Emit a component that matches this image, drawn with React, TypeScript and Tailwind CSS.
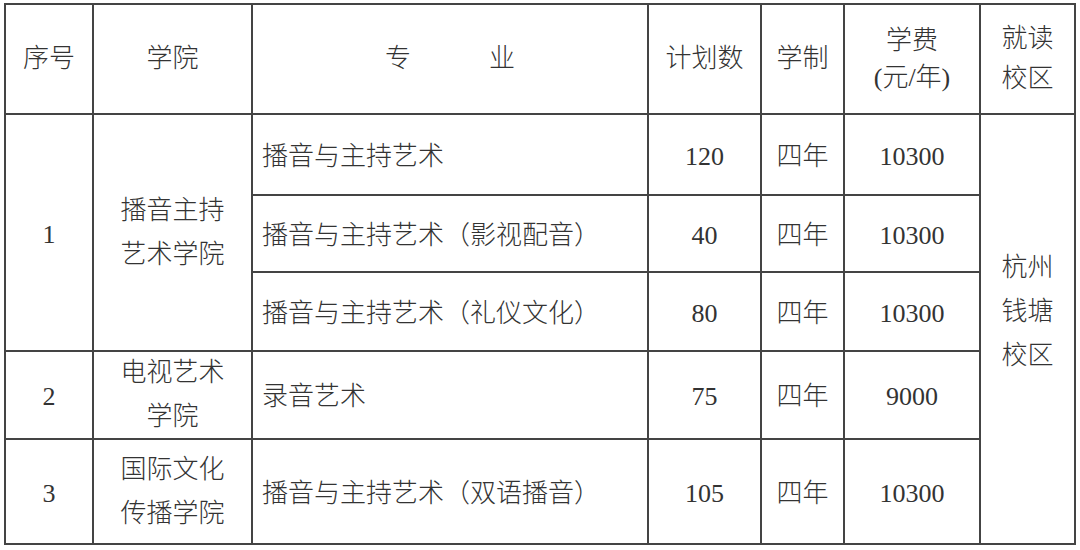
import { Fragment } from "react";

const FONT = {
  fontFamily: '"Liberation Serif", "Noto Sans CJK SC", serif',
};

const cell = "flex items-center justify-center bg-white text-center";

type Major = {
  name: string;
  plan: string;
  years: string;
  fee: string;
};

type College = {
  no: string;
  lines: string[];
  majors: Major[];
  rowClass: string;
};

const colleges: College[] = [
  {
    no: "1",
    lines: ["播音主持", "艺术学院"],
    majors: [
      { name: "播音与主持艺术", plan: "120", years: "四年", fee: "10300" },
      { name: "播音与主持艺术（影视配音）", plan: "40", years: "四年", fee: "10300" },
      { name: "播音与主持艺术（礼仪文化）", plan: "80", years: "四年", fee: "10300" },
    ],
    rowClass: "row-start-2 row-span-3",
  },
  {
    no: "2",
    lines: ["电视艺术", "学院"],
    majors: [{ name: "录音艺术", plan: "75", years: "四年", fee: "9000" }],
    rowClass: "row-start-5 row-span-1",
  },
  {
    no: "3",
    lines: ["国际文化", "传播学院"],
    majors: [
      { name: "播音与主持艺术（双语播音）", plan: "105", years: "四年", fee: "10300" },
    ],
    rowClass: "row-start-6 row-span-1",
  },
];

const ROW_START: Record<number, string> = {
  2: "row-start-2",
  3: "row-start-3",
  4: "row-start-4",
  5: "row-start-5",
  6: "row-start-6",
};

export default function App() {
  let rowIndex = 2;
  return (
    <div className="h-[550px] w-[1080px] bg-white pl-[4px] pt-[3px]" style={FONT}>
      <div className="grid w-[1072px] grid-cols-[86px_157px_394px_111px_81px_134px_93px] grid-rows-[108px_79px_75px_77px_86px_103px] gap-[2px] bg-[#444] p-[2px] text-[26px] font-light leading-[44px] text-[#333]">
        {/* header */}
        <div className={cell}>序号</div>
        <div className={cell}>学院</div>
        <div className={`${cell} whitespace-pre`}>专　　　业</div>
        <div className={cell}>计划数</div>
        <div className={cell}>学制</div>
        <div className={`${cell} flex-col leading-[37px]`}>
          <span>学费</span>
          <span>(元/年)</span>
        </div>
        <div className={`${cell} flex-col leading-[40px]`}>
          <span>就读</span>
          <span>校区</span>
        </div>

        {colleges.map((college) => (
          <Fragment key={college.no}>
            <div className={`${cell} col-start-1 ${college.rowClass}`}>
              <span className="pt-[4px]">{college.no}</span>
            </div>
            <div className={`${cell} col-start-2 flex-col ${college.rowClass}`}>
              {college.lines.map((line) => (
                <span key={line}>{line}</span>
              ))}
            </div>
            {college.majors.map((major) => {
              const rowStart = ROW_START[rowIndex++];
              return (
                <Fragment key={rowStart}>
                  <div className={`col-start-3 flex items-center bg-white pl-[9px] pt-[4px] ${rowStart}`}>
                    {major.name}
                  </div>
                  <div className={`${cell} col-start-4 pt-[4px] ${rowStart}`}>{major.plan}</div>
                  <div className={`${cell} col-start-5 pt-[4px] ${rowStart}`}>{major.years}</div>
                  <div className={`${cell} col-start-6 pt-[4px] ${rowStart}`}>{major.fee}</div>
                </Fragment>
              );
            })}
          </Fragment>
        ))}

        <div className={`${cell} col-start-7 row-start-2 row-span-5 flex-col pb-[34px]`}>
          <span>杭州</span>
          <span>钱塘</span>
          <span>校区</span>
        </div>
      </div>
    </div>
  );
}
